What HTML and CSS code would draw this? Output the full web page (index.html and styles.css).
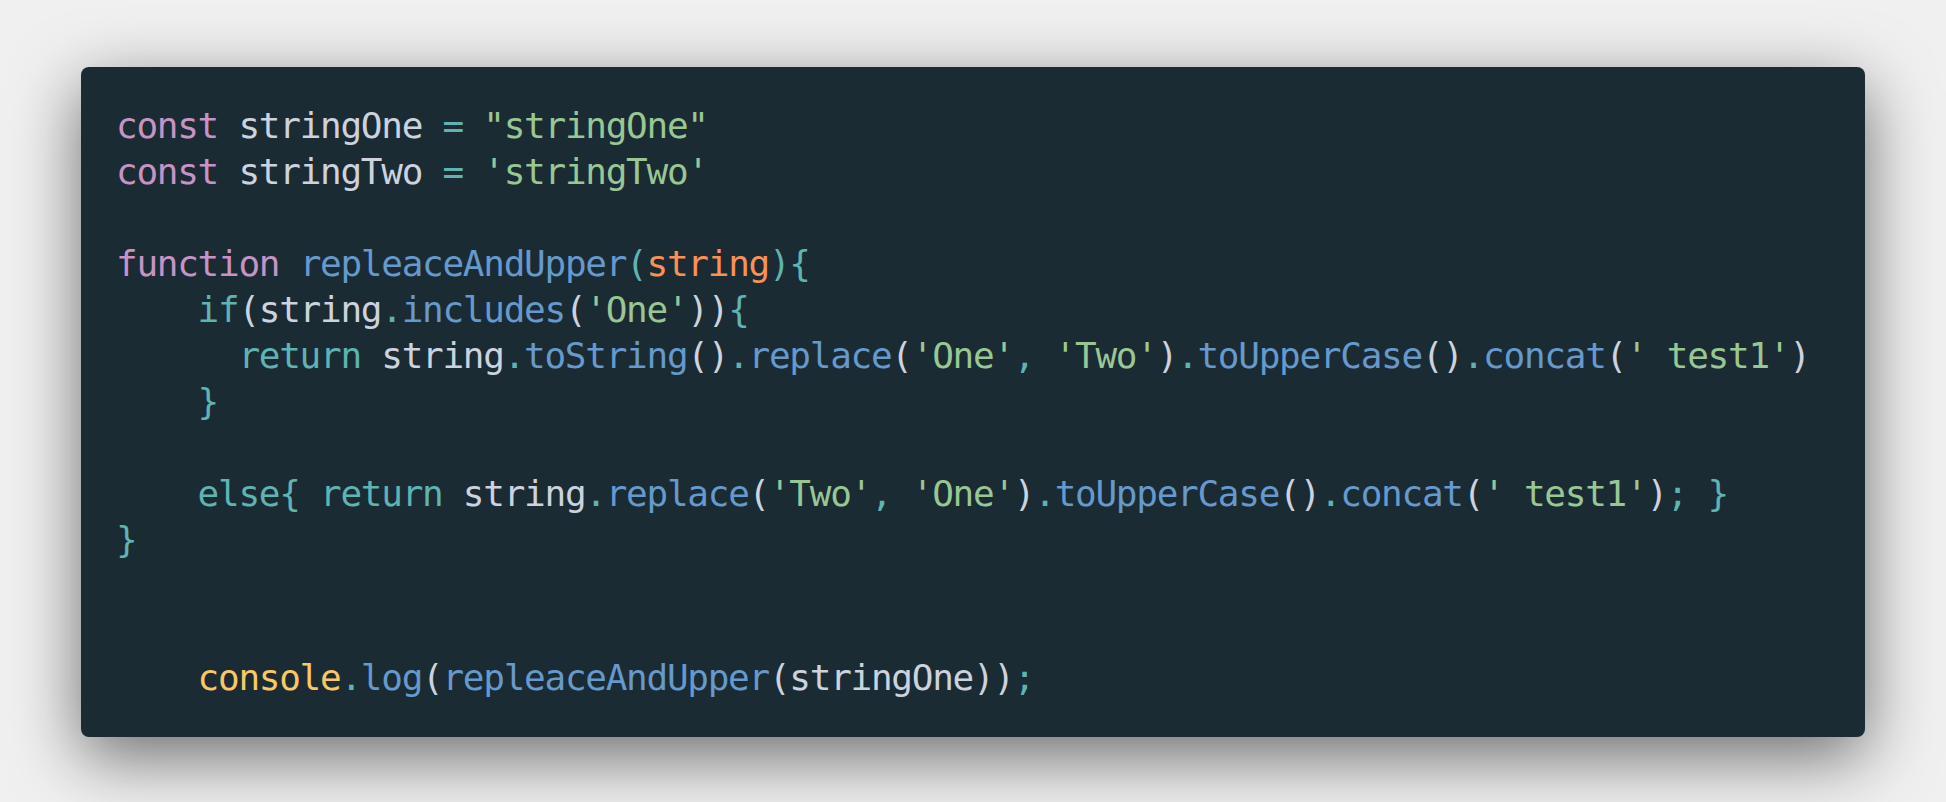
FILE: index.html
```html
<!DOCTYPE html>
<html lang="en">
<head>
<meta charset="utf-8">
<title>Code snippet</title>
<link rel="stylesheet" href="styles.css">
</head>
<body>
<main class="stage">
<section class="window">
<div class="code">
<div class="line"><span class="kw">const</span> stringOne <span class="op">=</span> <span class="str">"stringOne"</span></div>
<div class="line"><span class="kw">const</span> stringTwo <span class="op">=</span> <span class="str">'stringTwo'</span></div>
<div class="line"></div>
<div class="line"><span class="kw">function</span> <span class="fn">repleaceAndUpper</span><span class="op">(</span><span class="param">string</span><span class="op">){</span></div>
<div class="line ind4"><span class="op">if</span>(string<span class="op">.</span><span class="fn">includes</span>(<span class="str">'One'</span>))<span class="op">{</span></div>
<div class="line ind6"><span class="op">return</span> string<span class="op">.</span><span class="fn">toString</span>()<span class="op">.</span><span class="fn">replace</span>(<span class="str">'One'</span><span class="op">,</span> <span class="str">'Two'</span>)<span class="op">.</span><span class="fn">toUpperCase</span>()<span class="op">.</span><span class="fn">concat</span>(<span class="str">' test1'</span>)</div>
<div class="line ind4"><span class="op">}</span></div>
<div class="line"></div>
<div class="line ind4"><span class="op">else{</span> <span class="op">return</span> string<span class="op">.</span><span class="fn">replace</span>(<span class="str">'Two'</span><span class="op">,</span> <span class="str">'One'</span>)<span class="op">.</span><span class="fn">toUpperCase</span>()<span class="op">.</span><span class="fn">concat</span>(<span class="str">' test1'</span>)<span class="op">; }</span></div>
<div class="line"><span class="op">}</span></div>
<div class="line"></div>
<div class="line"></div>
<div class="line ind4"><span class="obj">console</span><span class="op">.</span><span class="fn">log</span>(<span class="fn">repleaceAndUpper</span>(stringOne))<span class="op">;</span></div>
</div>
</section>
</main>
</body>
</html>
```
FILE: styles.css
```css
html, body {
  margin: 0;
  padding: 0;
  background: #f0f0f0;
}

.stage {
  padding: 67px 81px 65px 81px;
}

.window {
  background: #1b2b34;
  border-radius: 8px;
  box-shadow: 0 20px 68px rgba(0, 0, 0, 0.55);
  padding: 36px 36px 36px 35px;
}

.code {
  font-family: "DejaVu Sans Mono", "Liberation Mono", monospace;
  font-size: 36px;
  letter-spacing: -1.27px;
  line-height: 46px;
  color: #cdd3de;
  display: flex;
  flex-direction: column;
}

.line {
  white-space: pre;
  height: 46px;
}

.ind4 { padding-left: 81.6px; }
.ind6 { padding-left: 122.4px; }

.kw { color: #c594c5; }
.op { color: #5fb3b3; }
.str { color: #99c794; }
.fn { color: #6699cc; }
.param { color: #f99157; }
.obj { color: #fac863; }
```
